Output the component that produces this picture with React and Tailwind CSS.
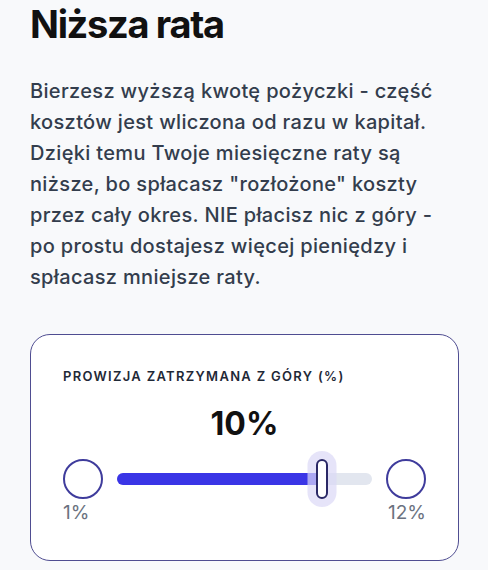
import React, { useState } from 'react';

const MIN = 1;
const MAX = 12;
const THUMB_W = 12;

const EndStop = ({ label, align }) => (
  <div className={`flex flex-col ${align === 'end' ? 'items-end' : 'items-start'}`}>
    <div className="w-10 h-10 rounded-full border-2 border-[#3f3c9c] bg-white" />
    <span className="mt-[2px] text-[19px] leading-[23px] text-[#6b7280]">{label}</span>
  </div>
);

const FeeSlider = ({ value }) => {
  const pct = (value - MIN) / (MAX - MIN);
  // thumb centre follows the native range maths: half a thumb in from each end
  const thumbLeft = `calc(${THUMB_W / 2}px + ${pct} * (100% - ${THUMB_W}px))`;

  return (
    <div className="flex items-start gap-[14px]">
      <EndStop label={`${MIN}%`} />
      <div className="relative flex-1 h-10 flex items-center">
        <div className="w-full h-3 rounded-full bg-[#e2e6ef]" />
        <div
          className="absolute left-0 top-[14px] h-3 rounded-full bg-[#3a35e6]"
          style={{ width: thumbLeft }}
        />
        <div
          className="absolute top-[-8px] w-[29px] h-[56px] -translate-x-1/2 rounded-full bg-[#dcd9f7]/70"
          style={{ left: thumbLeft }}
        />
        <div
          className="absolute top-0 w-3 h-10 -translate-x-1/2 rounded-full border-2 border-[#2a2866] bg-white"
          style={{ left: thumbLeft }}
        />
      </div>
      <EndStop label={`${MAX}%`} align="end" />
    </div>
  );
};

export default function App() {
  const [fee] = useState(10);

  return (
    <div className="min-h-[570px] bg-[#f8f9fb] pl-[30px] pr-[29px] pt-px font-['Inter',sans-serif]">
      <h1 className="text-[38px] leading-[46px] font-bold text-[#111111] tracking-[-0.035em]">
        Niższa rata
      </h1>

      <p className="mt-[29px] text-[20px] leading-[31px] font-medium text-[#333d4d] tracking-[0.017em]">
        Bierzesz wyższą kwotę pożyczki - część kosztów jest wliczona od razu w kapitał.
        Dzięki temu Twoje miesięczne raty są niższe, bo spłacasz "rozłożone" koszty
        przez cały okres. NIE płacisz nic z góry - po prostu dostajesz więcej pieniędzy
        i spłacasz mniejsze raty.
      </p>

      <div className="mt-[41px] rounded-[20px] border border-[#4f4d91] bg-white px-8 pt-[33px] pb-[36px]">
        <div className="text-[13px] leading-4 font-semibold tracking-[0.1em] text-[#1f2937] uppercase">
          Prowizja zatrzymana z góry (%)
        </div>
        <div className="mt-5 text-center text-[32px] leading-10 font-bold text-[#111111]">
          {fee}%
        </div>
        <div className="mt-[15px]">
          <FeeSlider value={fee} />
        </div>
      </div>
    </div>
  );
}
